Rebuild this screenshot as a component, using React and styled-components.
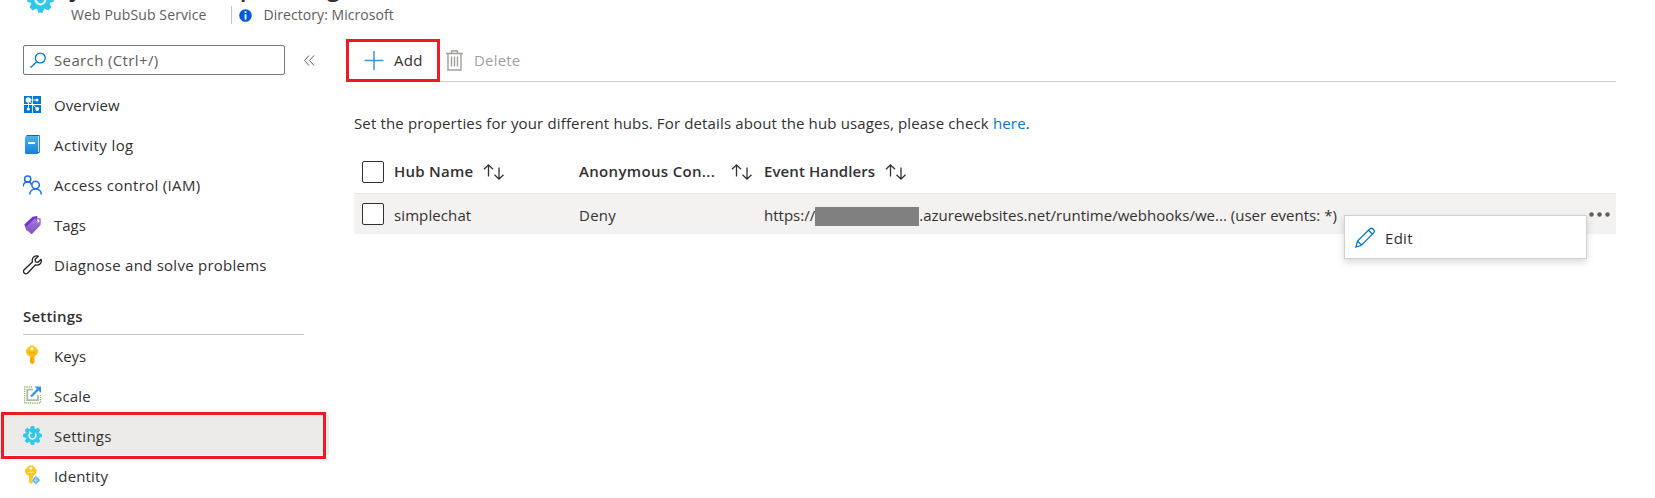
import React from 'react';
import styled, { createGlobalStyle } from 'styled-components';

const Global = createGlobalStyle`
  *{box-sizing:border-box}
  body{margin:0;background:#fff;overflow:hidden}
`;
const Page = styled.div`
  width:1655px;height:498px;overflow:hidden;display:flex;flex-direction:column;
  font:15px/20px "Open Sans","Noto Sans",sans-serif;color:#323130;background:#fff;
`;
const Label = styled.span`
  white-space:pre;letter-spacing:${p => p.$ls || 0}px;
  font-weight:${p => (p.$bold ? 600 : 400)};padding-top:${p => p.$drop || 0}px;
  padding-bottom:${p => p.$lift || 0}px;
`;
const Header = styled.header`
  height:27px;flex:none;display:flex;overflow:hidden;padding-left:27px;
`;
const HeaderIcon = styled.div`width:44px;height:27px;flex:none;margin-top:-14px;`;
const HeaderText = styled.div`display:flex;flex-direction:column;margin-top:-28px;`;
const Title = styled.div`font-size:24px;line-height:30px;height:33px;flex:none;font-weight:600;white-space:pre;`;
const Subtitle = styled.div`
  display:flex;align-items:center;height:20px;color:#605e5c;font-size:14px;
`;
const Divider = styled.span`width:1px;height:18px;background:#c8c6c4;margin-left:24px;margin-right:7px;`;
const Info = styled.span`display:flex;width:13px;margin-right:12px;`;
const Body = styled.div`display:flex;flex:1;min-height:0;`;
const Side = styled.nav`width:329px;flex:none;display:flex;flex-direction:column;padding-top:18px;`;
const SearchRow = styled.div`display:flex;align-items:center;padding-left:23px;height:30px;flex:none;margin-bottom:10px;gap:19px;`;
const Search = styled.div`
  width:262px;height:30px;border:1px solid #7a7876;border-radius:2px;display:flex;align-items:center;
  padding-left:6px;gap:8px;color:#605e5c;
`;
const NavItem = styled.div`
  height:40px;flex:none;display:flex;align-items:center;padding-left:23px;gap:12px;
  background:${p => (p.$active ? '#edebe9' : 'transparent')};position:relative;
`;
const NavIcon = styled.span`width:19px;height:20px;display:flex;align-items:center;`;
const Section = styled.div`
  height:50px;flex:none;margin:0 25px 0 23px;padding-top:21px;border-bottom:1px solid #c8c6c4;
`;
const NavHighlight = styled.div`
  position:absolute;left:1px;top:-3px;width:325px;height:47px;border:3px solid #ed1c24;
`;
const Main = styled.main`flex:1;display:flex;flex-direction:column;padding:12px 39px 0 17px;`;
const Toolbar = styled.div`
  height:43px;display:flex;align-items:flex-start;border-bottom:1px solid #d2d0ce;margin-left:8px;
`;
const AddButton = styled.div`
  width:94px;height:43px;border:3px solid #ed1c24;display:flex;align-items:center;
  padding-left:15px;gap:10px;margin-left:-8px;flex:none;
`;
const DeleteButton = styled.div`height:42px;display:flex;align-items:center;padding-left:6px;gap:11px;color:#a19f9d;`;
const Description = styled.p`margin:30px 0 0 8px;height:23px;line-height:22px;`;
const Link = styled.a`color:#0078d4;`;
const Table = styled.section`margin:16px 0 0 8px;`;
const Row = styled.div`
  display:grid;grid-template-columns:32px 185px 185px 1fr 27px;padding-left:8px;align-items:center;
  height:${p => (p.$head ? 42 : 41)}px;background:${p => (p.$head ? '#fff' : '#f3f2f1')};
  border-top:${p => (p.$head ? 'none' : '1px solid #e6e5e4')};position:relative;
`;
const Cell = styled.div`display:flex;align-items:center;padding-top:${p => p.$drop || 0}px;`;
const Sort = styled.span`display:flex;margin-left:${p => p.$gap || 10}px;`;
const Check = styled.span`width:22px;height:22px;border:1px solid #323130;border-radius:2px;background:#fff;margin-top:${p => p.$shift || 0}px;`;
const Redacted = styled.span`width:104px;height:19px;background:#808080;margin-top:3px;`;
const Menu = styled.div`
  position:absolute;left:990px;top:21px;width:243px;height:44px;background:#fff;border:1px solid #d2d0ce;
  box-shadow:0 3px 7px rgba(0,0,0,.16);display:flex;align-items:center;padding-left:10px;gap:9px;
`;

const teeth = [0, 45, 90, 135, 180, 225, 270, 315];
const Gear = ({ size }) => (
  <svg width={size} height={size} viewBox="0 0 18 18">
    <g fill="#32c8ea">
      <circle cx="9" cy="9" r="6.7" />
      {teeth.map(a => <path key={a} d="M6.600 3.200 7.500.1h3l.9 3.100z" transform={`rotate(${a} 9 9)`} />)}
    </g>
    <circle cx="9" cy="9" r="3.2" fill="none" stroke="#e8fbff" strokeWidth="1.5" strokeDasharray="14 6.1" transform="rotate(-35 9 9)" />
    <path d="M6 4.800v2.800h2.800z" fill="#e8fbff" />
  </svg>
);
const icons = {
  overview: (
    <svg width="19" height="18" viewBox="0 0 19 18">
      <path fill="#0078d4" d="M1 0h8.100v8.100H1zm8.900 0H18v8.100H9.900zM1 8.900h8.100V17H1zm8.900 0H18V17H9.900z" />
      <path d="M5.500 4v9M5 4h9M6 4.500l8.500 8.800" stroke="#fff" strokeWidth=".9" fill="none" />
      <g fill="#fff"><circle cx="5.300" cy="4" r="2.700" /><circle cx="14" cy="4" r="1.500" /><circle cx="5.300" cy="13" r="1.600" /><circle cx="14.300" cy="13" r="1.900" /></g>
    </svg>
  ),
  log: (
    <svg width="19" height="20" viewBox="0 0 19 20">
      <defs><linearGradient id="book" x2="0" y2="1"><stop stopColor="#50b2f0" /><stop offset="1" stopColor="#1480d8" /></linearGradient></defs>
      <path d="M3.5.5h12.800v17H15" fill="#fff" stroke="#1766a8" />
      <path d="M3.500 1H15v18H3.500Q2 19 2 17.500v-15Q2 1 3.500 1z" fill="url(#book)" />
      <path d="M5 7h7v2H5z" fill="#fff" />
    </svg>
  ),
  people: (
    <svg width="19" height="20" viewBox="0 0 19 20" fill="none" stroke="#1a6fe8" strokeWidth="1.5">
      <circle cx="4.700" cy="4" r="3.100" /><path d="M.2 11.500C.2 6 7.500 5.800 8.600 9.700" />
      <circle cx="12.600" cy="10" r="3.700" /><path d="M6.800 19.500c0-7.500 11.500-7.500 11.500 0" />
    </svg>
  ),
  tag: (
    <svg width="19" height="20" viewBox="0 0 19 20">
      <defs><linearGradient id="tag" x2="0" y2="1"><stop stopColor="#a77be0" /><stop offset="1" stopColor="#8151c0" /></linearGradient></defs>
      <path d="M1.300 9.500 9.600 1.700l4.700-.7v5L4 16z" fill="#7434d4" />
      <path d="m3 12 9-8.800 4.800-.2q1 0 1 1l-.2 6-8.300 8.700q-.7.6-1.300 0L3 14.300q-1-1 0-2.300z" fill="url(#tag)" />
      <circle cx="15" cy="6" r="1.400" fill="#fff" /><path d="M14.800 6.500Q12 5.500 13.200 1.800" fill="none" stroke="#4f2a92" strokeWidth=".8" />
    </svg>
  ),
  wrench: (
    <svg width="19" height="20" viewBox="0 0 19 20" fill="none" stroke="#252423" strokeWidth="1.300" strokeLinejoin="round">
      <path d="M15.300 1.200C12 0 8.300 2.500 9.400 7L1.200 14.800c-2 2.300 1 5.200 3.300 3.400l8-8.400c4 1.200 6.700-2.300 5.500-5.500l-3 3-2.400-.5-.5-2.500z" />
    </svg>
  ),
  key: (
    <svg width="19" height="20" viewBox="0 0 19 20">
      <defs><linearGradient id="key" x2="0" y2="1"><stop stopColor="#ffcf20" /><stop offset="1" stopColor="#f7a90c" /></linearGradient></defs>
      <path d="M7.500.5h3q1 0 4.500 4.500v2.500q-1 2.500-3.500 4v6L9.300 19.500 7 17.500v-6Q3.500 9.500 3 7.500V5Q6.500.5 7.500.5z" fill="url(#key)" />
      <circle cx="9" cy="3.800" r="1.500" fill="#fff" /><path d="M6 7.800h6M8.700 12v5" stroke="#e39a08" strokeWidth=".8" />
    </svg>
  ),
  scale: (
    <svg width="19" height="20" viewBox="0 0 19 20" fill="none">
      <path d="M9 2H1.700v16H17.500v-8" stroke="#7fc241" strokeWidth="1.300" strokeDasharray="1.200 1" />
      <path d="M10 4.700H4.300v10.500H15V10" stroke="#b5b5b5" strokeWidth="1.800" />
      <path d="m8 11.500 7-7" stroke="#3795e5" strokeWidth="2.400" /><path d="M11.500 1.500H18V8z" fill="#3795e5" />
    </svg>
  ),
  gear: <Gear size={19} />,
  identity: (
    <svg width="19" height="20" viewBox="0 0 19 20">
      <path d="M6.500.5h3q1 0 4 4.500V7q-1 2.500-3.500 4v6.500L8 19l-2-2v-6Q2.500 9 2 7V5Q5.500.5 6.500.5z" fill="#fcc61b" />
      <circle cx="7.800" cy="3.300" r="1.400" fill="#fff" /><path d="M5 7.300h6" stroke="#fff3b0" />
      <path d="m12.800 10.500 4.700 4.700-4.700 4.500L8.500 15.200z" fill="#59b4d9" stroke="#fff" strokeWidth=".7" /><path d="M12.800 12v6M10.500 15.200h4.700" stroke="#c5edfa" strokeWidth=".8" />
    </svg>
  ),
};
const SortIcon = ({ gap }) => (
  <Sort $gap={gap}>
    <svg width="22" height="18" viewBox="0 0 22 18" fill="none" stroke="#323130" strokeWidth="1.300">
      <path d="M5.500 13.500V2M1 6.300l4.500-4.500L10 6.300M16 4.500V16M11.500 11.700l4.500 4.500 4.500-4.500" />
    </svg>
  </Sort>
);
const Nav = ({ icon, ls, drop, active, children }) => (
  <NavItem $active={active}>
    <NavIcon>{icons[icon]}</NavIcon><Label $ls={ls} $drop={drop}>{children}</Label>
    {active && <NavHighlight />}
  </NavItem>
);

export default function App() {
  return (
    <Page>
      <Global />
      <Header>
        <HeaderIcon><Gear size={27} /></HeaderIcon>
        <HeaderText>
          <Title>jixinwebtest01pubsubg</Title>
          <Subtitle>
            <Label $ls={0.12}>Web PubSub Service</Label><Divider />
            <Info><svg width="13" height="13" viewBox="0 0 13 13"><circle cx="6.500" cy="6.500" r="6.300" fill="#015cda" /><path d="M5.600 2.300h1.900v1.800H5.600zM5.600 5.200h1.900v5.300H5.600z" fill="#fff" /></svg></Info>
            <Label $ls={0.05}>Directory: Microsoft</Label>
          </Subtitle>
        </HeaderText>
      </Header>
      <Body>
        <Side>
          <SearchRow>
            <Search>
              <svg width="16" height="17" viewBox="0 0 16 17" fill="none" stroke="#0078d4" strokeWidth="1.300"><circle cx="10.300" cy="6" r="4.900" /><path d="M6.800 9.500.5 15.800" /></svg>
              <Label $ls={0.37}>Search (Ctrl+/)</Label>
            </Search>
            <svg width="11" height="11" viewBox="0 0 11 11" fill="none" stroke="#605e5c"><path d="M5 .5l-4.500 5L5 10.500M10 .5l-4.500 5 4.500 5" /></svg>
          </SearchRow>
          <Nav icon="overview" ls={0.1}>Overview</Nav>
          <Nav icon="log" ls={0.4}>Activity log</Nav>
          <Nav icon="people" ls={0.32}>Access control (IAM)</Nav>
          <Nav icon="tag">Tags</Nav>
          <Nav icon="wrench" ls={0.25}>Diagnose and solve problems</Nav>
          <Section><Label $bold $ls={0.2}>Settings</Label></Section>
          <Nav icon="key" drop={2}>Keys</Nav>
          <Nav icon="scale" drop={2} ls={0.2}>Scale</Nav>
          <Nav icon="gear" drop={2} ls={0.25} active>Settings</Nav>
          <Nav icon="identity" drop={2} ls={0.15}>Identity</Nav>
        </Side>
        <Main>
          <Toolbar>
            <AddButton>
              <svg width="20" height="20" viewBox="0 0 20 20"><path d="M10 0v19M.5 9.500h19" stroke="#3a96dd" strokeWidth="1.500" /></svg>
              <Label $ls={0.3} $lift={2}>Add</Label>
            </AddButton>
            <DeleteButton>
              <svg width="17" height="21" viewBox="0 0 17 21" fill="none" stroke="#a19f9d" strokeWidth="1.400"><path d="M0 3.500h17M5.500 3V1h6v2M2 4v16h13V4M5.500 6.500v10M8.500 6.500v10M11.500 6.500v10" /></svg>
              <Label $ls={0.2}>Delete</Label>
            </DeleteButton>
          </Toolbar>
          <Description>
            <Label $ls={0.148}>Set the properties for your different hubs. For details about the hub usages, please check <Link>here</Link>.</Label>
          </Description>
          <Table>
            <Row $head>
              <Check $shift={-1} />
              <Cell><Label $bold $ls={0.25} $lift={2}>Hub Name</Label><SortIcon /></Cell>
              <Cell><Label $bold $ls={0.33} $lift={2}>Anonymous Con...</Label><SortIcon gap={16} /></Cell>
              <Cell><Label $bold $ls={0.1} $lift={2}>Event Handlers</Label><SortIcon /></Cell>
            </Row>
            <Row>
              <Check $shift={-1} />
              <Cell $drop={2}><Label $ls={0.1}>simplechat</Label></Cell>
              <Cell $drop={2}><Label $ls={0.25}>Deny</Label></Cell>
              <Cell $drop={2}><Label>https://</Label><Redacted /><Label $ls={0.02}>.azurewebsites.net/runtime/webhooks/we... (user events: *)</Label></Cell>
              <svg width="21" height="5" viewBox="0 0 21 5" fill="#605e5c"><circle cx="2.500" cy="2.500" r="2.200" /><circle cx="10.500" cy="2.500" r="2.200" /><circle cx="18.500" cy="2.500" r="2.200" /></svg>
              <Menu>
                <svg width="21" height="21" viewBox="0 0 21 21" fill="none" stroke="#0078d4" strokeWidth="1.300"><path d="M1 20l1.500-6L15 1.800q1.500-1.300 3.300.4t.5 3.500L6.500 18.300zM13.500 3.300l4 4M2.500 14l4 4" /></svg>
                <Label $ls={0.3} $drop={2}>Edit</Label>
              </Menu>
            </Row>
          </Table>
        </Main>
      </Body>
    </Page>
  );
}
